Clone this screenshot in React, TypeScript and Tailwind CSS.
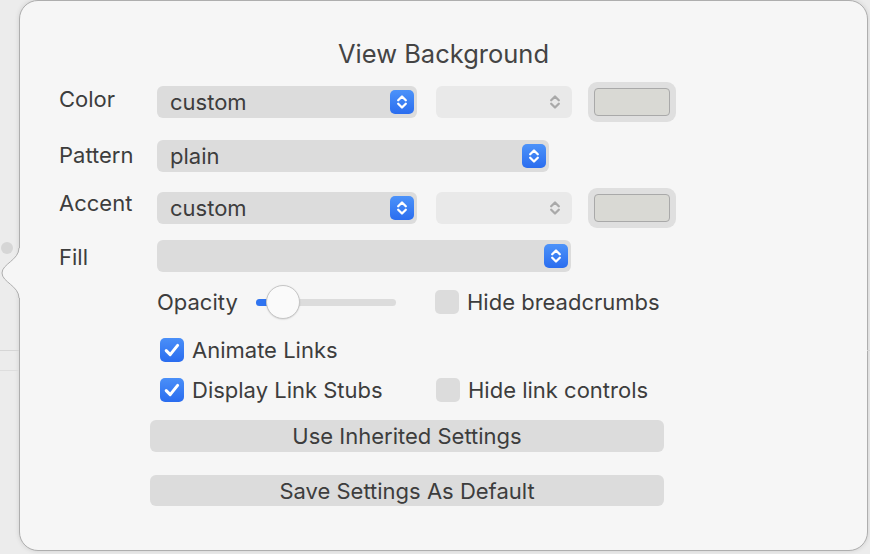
import React from "react";

const font = "font-['Inter','Liberation_Sans',sans-serif]";

function Stepper({ disabled = false }: { disabled?: boolean }) {
  const stroke = disabled ? "#a9a9a9" : "#ffffff";
  return (
    <svg width="24" height="24" viewBox="0 0 24 24" fill="none">
      <path d="M8.2 10.2 L12 6.5 L15.8 10.2" stroke={stroke} strokeWidth="2.3" strokeLinecap="round" strokeLinejoin="round" />
      <path d="M8.2 13.8 L12 17.5 L15.8 13.8" stroke={stroke} strokeWidth="2.3" strokeLinecap="round" strokeLinejoin="round" />
    </svg>
  );
}

function Select({ value, width }: { value?: string; width: string }) {
  return (
    <div className={`flex h-[32px] ${width} items-center justify-between rounded-[6px] bg-[#dcdcdc] pl-[13px] pr-[3px]`}>
      <span className="text-[22px] leading-none text-[#3d3d3d]">{value}</span>
      <span className="flex h-[24px] w-[24px] items-center justify-center rounded-[5px] bg-linear-to-b from-[#4c92f9] to-[#2b6def]">
        <Stepper />
      </span>
    </div>
  );
}

function DisabledSelect() {
  return (
    <div className="ml-[19px] flex h-[32px] w-[136px] items-center justify-end rounded-[6px] bg-[#e9e9e9] pr-[5px]">
      <Stepper disabled />
    </div>
  );
}

function ColorWell() {
  return (
    <div className="ml-[16px] flex h-[40px] w-[88px] items-center justify-center rounded-[9px] bg-[#dfdfdf]">
      <div className="h-[28px] w-[76px] rounded-[4px] border border-[#a9a9a9] bg-[#d9d9d4]" />
    </div>
  );
}

function Checkbox({ checked }: { checked?: boolean }) {
  if (!checked) {
    return <span className="block h-[24px] w-[24px] shrink-0 rounded-[5px] bg-[#dcdcdc]" />;
  }
  return (
    <span className="flex h-[24px] w-[24px] shrink-0 items-center justify-center rounded-[5px] bg-linear-to-b from-[#4a8ff8] to-[#2a6cef]">
      <svg width="24" height="24" viewBox="0 0 24 24" fill="none">
        <path d="M6.2 12.6 L10.2 16.6 L17.6 7.4" stroke="#fff" strokeWidth="3" strokeLinecap="round" strokeLinejoin="round" />
      </svg>
    </span>
  );
}

function Check({ label, checked, className = "" }: { label: string; checked?: boolean; className?: string }) {
  return (
    <div className={`flex items-center gap-[8px] ${className}`}>
      <Checkbox checked={checked} />
      <span className="text-[22px] leading-none text-[#3d3d3d]">{label}</span>
    </div>
  );
}

export default function App() {
  return (
    <div className={`relative h-[554px] w-[870px] overflow-hidden bg-[#ececec] ${font}`}>
      {/* bits of the window behind the popover */}
      <div className="absolute left-0 top-[350px] h-px w-[19px] bg-[#d6d6d6]" />
      <div className="absolute left-0 top-[370px] h-px w-[19px] bg-[#dedede]" />
      <div className="absolute right-0 top-[350px] h-px w-[3px] bg-[#d6d6d6]" />
      <div className="absolute left-[1px] top-[242px] h-[12px] w-[12px] rounded-full bg-[#d6d6d6]" />

      <div className="ml-[19px] h-[551px] w-[849px] rounded-[19px] border border-[#aeaeae] bg-[#f6f6f6] shadow-[0_0_5px_rgba(0,0,0,0.12)]">
        <div className="pl-[39px] pt-[37px] text-[#3d3d3d]">
          <div className="ml-[-39px] flex h-[32px] items-center justify-center text-[25.5px] leading-none text-[#444]">
            View Background
          </div>

          {/* Color */}
          <div className="mt-[12px] flex h-[40px] items-center">
            <span className="mb-[6px] w-[98px] text-[22px] leading-none">Color</span>
            <Select value="custom" width="w-[260px]" />
            <DisabledSelect />
            <ColorWell />
          </div>

          {/* Pattern */}
          <div className="mt-[18px] flex h-[32px] items-center">
            <span className="mb-[2px] w-[98px] text-[22px] leading-none">Pattern</span>
            <Select value="plain" width="w-[392px]" />
          </div>

          {/* Accent */}
          <div className="mt-[16px] flex h-[40px] items-center">
            <span className="mb-[10px] w-[98px] text-[22px] leading-none">Accent</span>
            <Select value="custom" width="w-[260px]" />
            <DisabledSelect />
            <ColorWell />
          </div>

          {/* Fill */}
          <div className="mt-[12px] flex h-[32px] items-center">
            <span className="mt-[2px] w-[98px] text-[22px] leading-none">Fill</span>
            <Select width="w-[414px]" />
          </div>

          {/* Opacity */}
          <div className="mt-[13px] flex h-[34px] items-center pl-[98px]">
            <div className="flex w-[278px] items-center">
              <span className="text-[22px] leading-none">Opacity</span>
              <div className="relative ml-[18px] h-[7px] w-[140px] rounded-full bg-[#dcdcdc]">
                <div className="h-[7px] w-[14px] rounded-full bg-[#2f74f1]" />
                <div className="absolute left-[10px] top-[-14px] h-[34px] w-[34px] rounded-full border-[1.5px] border-[#c6c6c6] bg-[#fafafa] shadow-[0_0.5px_1.5px_rgba(0,0,0,0.15)]" />
              </div>
            </div>
            <Check label="Hide breadcrumbs" />
          </div>

          {/* Animate Links */}
          <div className="mt-[19px] flex h-[24px] items-center pl-[101px]">
            <Check label="Animate Links" checked />
          </div>

          {/* Display Link Stubs */}
          <div className="mt-[16px] flex h-[24px] items-center pl-[101px]">
            <Check label="Display Link Stubs" checked className="w-[276px]" />
            <Check label="Hide link controls" />
          </div>

          <button
            type="button"
            className="ml-[91px] mt-[18px] flex h-[32px] w-[514px] items-center justify-center rounded-[6px] bg-[#dcdcdc] text-[22px] leading-none text-[#3d3d3d]"
          >
            Use Inherited Settings
          </button>
          <button
            type="button"
            className="ml-[91px] mt-[23px] flex h-[31px] w-[514px] items-center justify-center rounded-[6px] bg-[#dcdcdc] text-[22px] leading-none text-[#3d3d3d]"
          >
            Save Settings As Default
          </button>
        </div>
      </div>

      {/* popover arrow */}
      <svg className="absolute left-0 top-[246px]" width="24" height="54" viewBox="0 0 24 54" fill="none">
        <path d="M19 2 C19 14 2 18 2 27 C2 36 19 40 19 52 L23 52 L23 2 Z" fill="#f6f6f6" />
        <path d="M19 2 C19 14 2 18 2 27 C2 36 19 40 19 52" stroke="#aeaeae" strokeWidth="1" />
      </svg>
    </div>
  );
}
